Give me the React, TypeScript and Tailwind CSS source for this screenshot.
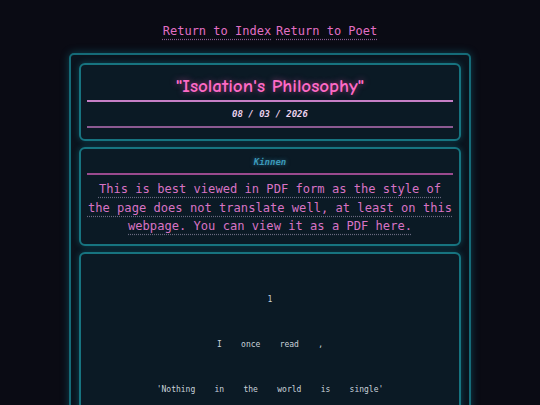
import React from "react";

const poem: string[] = [
  "1",
  "I once read ,",
  "'Nothing in the world is single'",
  "Each thing by a law divine",
  "In one spirit meet and mingle",
];

export default function App() {
  return (
    <div
      className="min-h-screen bg-[#0a0b14] overflow-hidden"
      style={{ fontFamily: '"DejaVu Sans Mono", monospace' }}
    >
      <nav className="flex justify-center gap-[5px] pt-[23px] text-[12px] leading-[16px] text-[#e26fc4]">
        <a className="underline decoration-dotted decoration-[#8a5a8f] underline-offset-[4px]">Return to Index</a>
        <a className="underline decoration-dotted decoration-[#8a5a8f] underline-offset-[4px]">Return to Poet</a>
      </nav>

      <main className="mx-auto mt-[14px] w-[402px] rounded-[5px] border-2 border-[#156b78] bg-[#0a141e] p-[8px] shadow-[0_0_8px_rgba(20,130,150,0.45)] flex flex-col gap-[6px]">
        <section className="rounded-[6px] border-2 border-[#177480] bg-[#0b1a25] px-[6px] pt-[9px] pb-[11px] shadow-[0_0_6px_rgba(20,140,160,0.4)]">
          <h1
            className="text-center text-[19px] leading-[24px] font-black text-[#ff6ac6] [text-shadow:0_0_6px_rgba(255,90,190,0.55)]"
            style={{ fontFamily: '"Comic Sans MS", "Comic Neue", "DejaVu Sans", sans-serif' }}
          >
            "Isolation's Philosophy"
          </h1>
          <div className="mt-[2px] h-[2px] bg-[#c67fc6]" />
          <div className="mt-[6px] text-center text-[9px] leading-[13px] font-bold italic text-[#ecd2ee]">
            08 / 03 / 2026
          </div>
          <div className="mt-[5px] h-[2px] bg-[#8c5a92]" />
        </section>

        <section className="rounded-[6px] border-2 border-[#177480] bg-[#0b1a25] px-[6px] pt-[7px] pb-[8px] shadow-[0_0_6px_rgba(20,140,160,0.4)]">
          <div className="text-center text-[9px] leading-[12px] font-bold italic text-[#3b98b8] [text-shadow:0_0_4px_rgba(60,160,200,0.5)]">
            Kinnen
          </div>
          <div className="mt-[5px] h-[2px] bg-[#9a4a8e]" />
          <p className="mt-[5px] text-center text-[12.1px] leading-[18.5px] text-[#d873c4]">
            <span className="underline decoration-dotted decoration-[#6a6a80] underline-offset-[4px]">
              This is best viewed in PDF form as the style of the page does not translate well, at least on this webpage. You can view it as a PDF here.
            </span>
          </p>
        </section>

        <section className="rounded-[6px] border-2 border-[#177480] bg-[#0b1a25] px-[6px] pt-[40px] pb-[40px] shadow-[0_0_6px_rgba(20,140,160,0.4)]">
          {poem.map((line, i) => (
            <div
              key={i}
              className="mb-[33px] text-center text-[8px] leading-[12px] text-[#c9d2da] [word-spacing:14.5px]"
            >
              {line}
            </div>
          ))}
        </section>
      </main>
    </div>
  );
}
